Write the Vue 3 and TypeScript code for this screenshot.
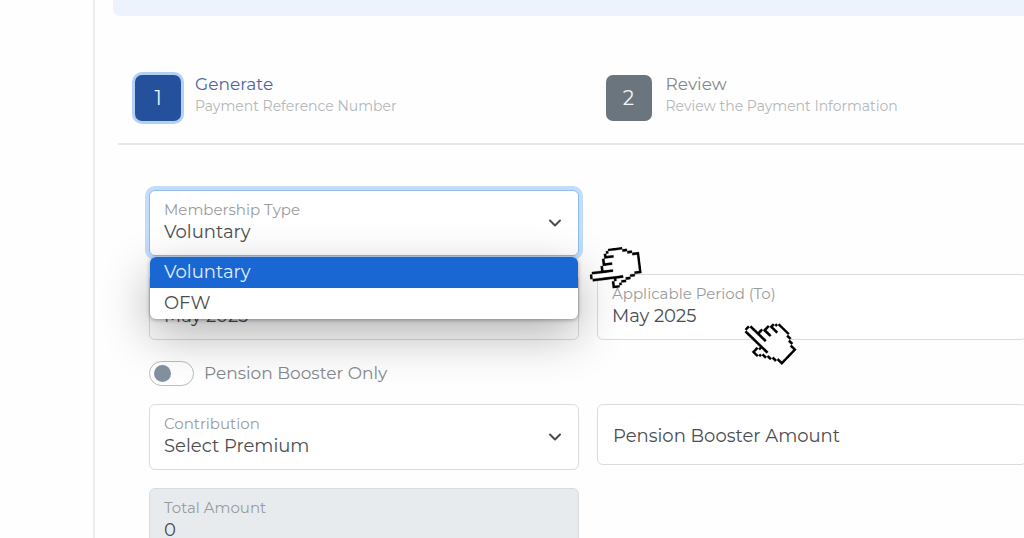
<script setup lang="ts">
import { ref } from 'vue'

interface Step {
  number: number
  title: string
  detail: string
}

const steps: Step[] = [
  { number: 1, title: 'Generate', detail: 'Payment Reference Number' },
  { number: 2, title: 'Review', detail: 'Review the Payment Information' },
]
const currentStep = ref(1)

const membershipTypes = ['Voluntary', 'OFW']
const membership = ref('Voluntary')
const periodFrom = ref('May 2025')
const periodTo = ref('May 2025')
const boosterOnly = ref(false)
const premium = ref('Select Premium')
const total = ref('0')

// Pixel rows of the pointing hand: X is outline, o is fill.
const handRows = [
  '.....XX..........',
  '....XooX.........',
  '....XooX.........',
  '....XooX.........',
  '....XooX.........',
  '....XooXXX.......',
  '....XooXooXXX....',
  '....XooXooXooXX..',
  '....XooXooXooXoX.',
  'XXX.XooXooXooXooX',
  'XooXXooooooooXooX',
  'XoooXoooooooooooX',
  '.XooXoooooooooooX',
  '..XoXoooooooooooX',
  '..XoooooooooooooX',
  '...XoooooooooooX.',
  '...XoooooooooooX.',
  '....XoooooooooX..',
  '....XoooooooooX..',
  '.....XoooooooX...',
  '.....XoooooooX...',
  '.....XXXXXXXXX...',
]

function pixels(kind: string): string {
  return handRows
    .map((row, y) =>
      [...row].map((c, x) => (c !== '.' && (kind === 'all' || c === kind) ? `M${x} ${y}h1v1h-1z` : '')).join(''),
    )
    .join('')
}
const handFill = pixels('all')
const handOutline = pixels('X')
const hands = ['hand-left', 'hand-up-left']
</script>

<template>
  <main class="page">
    <section class="panel">
      <div class="notice"></div>

      <nav class="steps" aria-label="Progress">
        <button
          v-for="step in steps"
          :key="step.number"
          type="button"
          class="step"
          :class="{ active: step.number === currentStep }"
          @click="currentStep = step.number"
        >
          <span class="step-number">{{ step.number }}</span>
          <span class="step-text">
            <span class="step-title">{{ step.title }}</span>
            <span class="step-detail">{{ step.detail }}</span>
          </span>
        </button>
      </nav>

      <form class="form" @submit.prevent>
        <div class="field focused membership">
          <div class="field-body">
            <label for="membership">Membership Type</label>
            <select id="membership" v-model="membership">
              <option v-for="type in membershipTypes" :key="type">{{ type }}</option>
            </select>
          </div>
          <svg class="chevron" viewBox="0 0 16 16" aria-hidden="true"><path d="M3 5.5l5 5 5-5" /></svg>
          <ul class="menu" role="listbox" aria-label="Membership Type">
            <li
              v-for="type in membershipTypes"
              :key="type"
              role="option"
              :aria-selected="type === membership"
              :class="{ selected: type === membership }"
              @click="membership = type"
            >
              {{ type }}
            </li>
          </ul>
        </div>

        <div class="field from">
          <input v-model="periodFrom" type="text" aria-label="Applicable Period (From)" />
        </div>

        <div class="field to">
          <div class="field-body">
            <label for="to">Applicable Period (To)</label>
            <input id="to" v-model="periodTo" type="text" />
          </div>
        </div>

        <div class="switch">
          <input id="booster" v-model="boosterOnly" type="checkbox" role="switch" />
          <label for="booster">Pension Booster Only</label>
        </div>

        <div class="field contribution">
          <div class="field-body">
            <label for="premium">Contribution</label>
            <select id="premium" v-model="premium">
              <option>Select Premium</option>
            </select>
          </div>
          <svg class="chevron" viewBox="0 0 16 16" aria-hidden="true"><path d="M3 5.5l5 5 5-5" /></svg>
        </div>

        <div class="field amount">
          <input type="text" placeholder="Pension Booster Amount" aria-label="Pension Booster Amount" />
        </div>

        <div class="field total">
          <div class="field-body">
            <label for="total">Total Amount</label>
            <input id="total" v-model="total" type="text" readonly />
          </div>
        </div>
      </form>
    </section>

    <svg v-for="hand in hands" :key="hand" class="hand" :class="hand" viewBox="0 0 17 22" aria-hidden="true">
      <path :d="handFill" fill="#fff" stroke="#fff" stroke-width="0.2" />
      <path :d="handOutline" fill="#000" stroke="#000" stroke-width="0.1" />
    </svg>
  </main>
</template>

<style>
body {
  margin: 0;
  background: #fefefe;
}
</style>

<style scoped>
* {
  box-sizing: border-box;
}
.page {
  position: relative;
  height: 100vh;
  overflow: hidden;
  padding-left: 93px;
  font-family: Montserrat, Inter, 'Open Sans', sans-serif;
  font-size: 18px;
  color: #4a4d50;
}
.panel {
  min-height: 100%;
  margin-right: -36px;
  padding: 0 0 0 24px;
  border-left: 2px solid #ededef;
}
.notice {
  height: 16px;
  margin-left: -6px;
  border-radius: 0 0 7px 7px;
  background: #ecf3fc;
}
.steps {
  display: grid;
  grid-template-columns: 1fr 1fr;
  margin: 0 -16px 0 -1px;
  padding: 56px 0 19px 17px;
  border-bottom: 2px solid #e7e7e8;
}
.step {
  display: flex;
  align-items: center;
  gap: 14px;
  padding: 0;
  border: 0;
  background: none;
  color: #84898d;
  font: inherit;
  text-align: left;
}
.step-number {
  display: grid;
  place-items: center;
  width: 46px;
  height: 46px;
  margin: 3px 0;
  border-radius: 7px;
  background: #6b757d;
  color: #f4f5f6;
  font-size: 20px;
}
.step-text {
  display: grid;
  padding-bottom: 5px;
}
.step-title {
  font-size: 17px;
  line-height: 22px;
}
.step-detail {
  font-size: 14px;
  line-height: 23px;
  color: #b4b7ba;
}
.active .step-number {
  background: #25509c;
  box-shadow: 0 0 0 3px #b3d0f5;
}
.active .step-title {
  color: #4d64a0;
}
.form {
  display: grid;
  grid-template-columns: 1fr 1fr;
  grid-template-areas:
    'membership .'
    'from to'
    'switch .'
    'contribution amount'
    'total .';
  align-items: start;
  gap: 18px 18px;
  padding: 45px 33px 0 30px;
}
.field {
  position: relative;
  display: flex;
  align-items: center;
  min-height: 61px;
  padding: 8px 15px 12px 14px;
  border: 1px solid #d9dbdd;
  border-radius: 6px;
  background: #fff;
}
.membership {
  grid-area: membership;
  z-index: 1;
}
.from {
  grid-area: from;
  padding-top: 30px;
}
.to {
  grid-area: to;
}
.contribution {
  grid-area: contribution;
}
.amount {
  grid-area: amount;
  padding: 2px 15px 0;
}
.total {
  grid-area: total;
  background: #e8ebed;
}
.focused {
  border-color: #8fbcf2;
  box-shadow: 0 0 0 4px #c3dcfa;
}
.field-body {
  display: grid;
  flex: 1;
}
.field label {
  font-size: 15px;
  line-height: 22px;
  color: #999b9d;
}
.field input,
.field select {
  width: 100%;
  height: 22px;
  margin: 0;
  padding: 0;
  border: 0;
  outline: 0;
  appearance: none;
  background: none;
  color: inherit;
  font: inherit;
  line-height: 22px;
}
.field input::placeholder {
  color: inherit;
  opacity: 1;
}
.chevron {
  width: 16px;
  height: 16px;
  margin-top: 4px;
  fill: none;
  stroke: #4a4d50;
  stroke-width: 2;
  stroke-linecap: round;
  stroke-linejoin: round;
}
.menu {
  position: absolute;
  top: calc(100% + 2px);
  left: 0;
  right: 0;
  margin: 0;
  padding: 0;
  overflow: hidden;
  border-radius: 6px;
  background: #fff;
  box-shadow: 0 1px 4px rgba(0, 0, 0, 0.35), 0 16px 48px rgba(0, 0, 0, 0.3);
  list-style: none;
}
.menu li {
  padding: 0 14px;
  line-height: 31px;
}
.menu .selected {
  background: #1967d2;
  color: #e4eefb;
}
.switch {
  grid-area: switch;
  display: flex;
  align-items: center;
  gap: 10px;
  padding: 3px 0 0;
  color: #84898d;
  font-size: 17px;
}
.switch input {
  display: flex;
  align-items: center;
  width: 45px;
  height: 25px;
  margin: 0;
  padding: 0 4px;
  border: 1px solid #b9bdc1;
  border-radius: 13px;
  appearance: none;
  background: #fff;
}
.switch input::before {
  content: '';
  width: 17px;
  height: 17px;
  border-radius: 50%;
  background: #8391a1;
}
.switch input:checked::before {
  margin-left: auto;
}
.switch label {
  line-height: 25px;
}
.hand {
  position: absolute;
  z-index: 2;
  width: 40px;
  height: 52px;
}
.hand-left {
  left: 595px;
  top: 242px;
  transform: rotate(-97deg);
}
.hand-up-left {
  left: 749px;
  top: 315px;
  transform: rotate(-46deg);
}
</style>
